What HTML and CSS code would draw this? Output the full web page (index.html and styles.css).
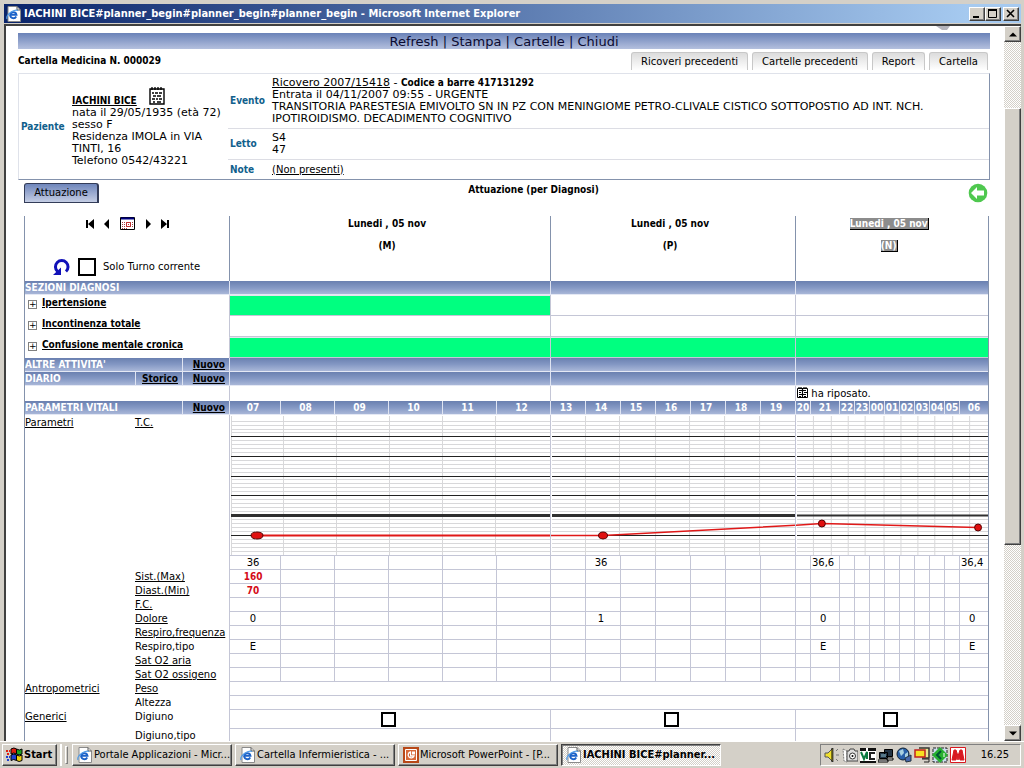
FILE: index.html
```html
<!DOCTYPE html>
<html lang="it">
<head>
<meta charset="utf-8">
<title>IACHINI BICE - Cartella Medicina</title>
<link rel="stylesheet" href="styles.css">
</head>
<body>
<svg class="defs" aria-hidden="true">
  <symbol id="ie" viewBox="0 0 16 16">
    <path d="M2 .5h9l3.500 3.500v11.500H2z" fill="#fff" stroke="#8a8a8a"/>
    <path d="M11 .5V4h3.500" fill="none" stroke="#555"/>
    <path d="M10.500 8.800H4.200a3.200 3.200 0 0 1 6.300 0zM4.200 9.200a3.200 3.200 0 0 0 6 1.300" fill="none" stroke="#1c62c8" stroke-width="1.900"/>
    <path d="M1 13C-.5 9 8 2.500 12 4.500" fill="none" stroke="#4f9be8" stroke-width="1.200"/>
  </symbol>
  <symbol id="notes" viewBox="0 0 16 18">
    <path d="M1 2h14v15H1z" fill="#fff" stroke="#000" stroke-width="1.400"/>
    <path d="M3 0v3M6 0v3M9 0v3M12 0v3" stroke="#000" stroke-width="1.300"/>
    <path d="M3 6h2m1 0h3m1 0h3M4 9h3m1 0h4M3 12h3m1 0h2m1 0h3M4 15h2m2 0h4" stroke="#000" stroke-width="1.500"/>
  </symbol>
  <symbol id="book" viewBox="0 0 11 11">
    <path d="M.5 1.500h10v9H.5z" fill="#fff" stroke="#000"/>
    <path d="M5.500 1v10M2 0v2M4 0v2M7 0v2M9 0v2M2 3.500h3M6 3.500h3M2 5.500h2M7 5.500h3M2 7.500h3M6 7.500h3M2 9.500h2M7 9.500h2" stroke="#000" stroke-width="1.200"/>
  </symbol>
</svg>

<header class="titlebar">
  <svg class="ico" role="img" aria-label="Internet Explorer"><use href="#ie"/></svg>
  <h1>IACHINI BICE#planner_begin#planner_begin#planner_begin - Microsoft Internet Explorer</h1>
  <button class="win" aria-label="Riduci a icona"><svg viewBox="0 0 12 10"><path d="M2 8h6" stroke="#000" stroke-width="2"/></svg></button>
  <button class="win" aria-label="Ingrandisci"><svg viewBox="0 0 12 10"><path d="M1.500 1v7.500h8V1M1 1h9" fill="none" stroke="#000"/><path d="M1 1h9" stroke="#000" stroke-width="2"/></svg></button>
  <button class="win close" aria-label="Chiudi finestra"><svg viewBox="0 0 12 10"><path d="M2 1l7 7M9 1L2 8" stroke="#000" stroke-width="1.600"/></svg></button>
</header>

<div class="viewport">
  <main class="page">
    <svg class="blob" viewBox="0 0 14 5" aria-hidden="true"><path d="M0 0h14l-3 4H6z" fill="#b4b4bc"/></svg>
    <nav class="menubar"><a href="#">Refresh</a> | <a href="#">Stampa</a> | <a href="#">Cartelle</a> | <a href="#">Chiudi</a></nav>

    <div class="record">
      <h2>Cartella Medicina N. 000029</h2>
      <div class="tabs">
        <button>Ricoveri precedenti</button>
        <button>Cartelle precedenti</button>
        <button>Report</button>
        <button>Cartella</button>
      </div>
    </div>

    <section class="patient">
      <div class="person">
        <b class="key">Paziente</b>
        <div>
          <div class="name"><a href="#">IACHINI BICE</a><svg role="img" aria-label="Note paziente"><use href="#notes"/></svg></div>
          nata il 29/05/1935 (età 72)<br>sesso F<br>Residenza IMOLA in VIA<br>TINTI, 16<br>Telefono 0542/43221
        </div>
      </div>
      <div class="facts">
        <div class="fact event"><b class="key">Evento</b><p><a href="#">Ricovero 2007/15418</a> - <b>Codice a barre 417131292</b><br>Entrata il 04/11/2007 09:55 - URGENTE<br>TRANSITORIA PARESTESIA EMIVOLTO SN IN PZ CON MENINGIOME PETRO-CLIVALE CISTICO SOTTOPOSTIO AD INT. NCH.<br>IPOTIROIDISMO. DECADIMENTO COGNITIVO</p></div>
        <div class="fact bed"><b class="key">Letto</b><p>S4<br>47</p></div>
        <div class="fact note"><b class="key">Note</b><p><a href="#">(Non presenti)</a></p></div>
      </div>
    </section>

    <div class="heading">
      <button class="active-tab">Attuazione</button>
      <h2>Attuazione (per Diagnosi)</h2>
      <a class="back" href="#" aria-label="Indietro"><svg viewBox="0 0 20 20"><circle cx="10" cy="10" r="9.300" fill="#4fc84f"/><path d="M3 10l6-6v3.500h7v5H9V16z" fill="#fff"/></svg></a>
    </div>

    <table class="planner">
      <colgroup>
        <col class="c-cat"><col class="c-lab"><col class="c-lab">
        <col class="c-m1"><col class="c-m" span="5">
        <col class="c-p" span="7">
        <col class="c-n"><col class="c-nw"><col class="c-n" span="8"><col class="c-nw">
      </colgroup>
      <tbody>
      <tr class="days">
        <td colspan="3">
          <div class="steps">
            <button aria-label="Primo"><svg viewBox="0 0 8 10"><path d="M0 1h2v8H0zM8 0v10L2 5z"/></svg></button>
            <button aria-label="Precedente"><svg viewBox="0 0 8 10"><path d="M6 0v10L1 5z"/></svg></button>
            <button class="cal" aria-label="Calendario"><svg viewBox="0 0 15 13"><path d="M.5 .5h14v12H.5z" fill="#fff" stroke="#000"/><path d="M1 1.500h13" stroke="#000080" stroke-width="2"/><path d="M2 5.500h11M2 7.500h11M2 9.500h11M2 11.500h6" stroke="#a04040" stroke-dasharray="1 1"/><path d="M6.500 5.500h4v4h-4z" fill="#fff" stroke="#c03030"/><path d="M8 7.500h1" stroke="#c03030"/></svg></button>
            <button aria-label="Successivo"><svg viewBox="0 0 8 10"><path d="M2 0v10l5-5z"/></svg></button>
            <button aria-label="Ultimo"><svg viewBox="0 0 8 10"><path d="M6 1h2v8H6zM0 0v10l6-5z"/></svg></button>
          </div>
          <div class="shift">
            <button aria-label="Aggiorna"><svg viewBox="0 0 17 17"><path d="M4.500 12.500A6.300 6.300 0 1 1 13 12.500" fill="none" stroke="#1111b8" stroke-width="3"/><path d="M0 16h8V8.500z" fill="#1111b8"/></svg></button>
            <label><input type="checkbox"> Solo Turno corrente</label>
          </div>
        </td>
        <th colspan="6"><span>Lunedi , 05 nov</span><span>(M)</span></th>
        <th colspan="7"><span>Lunedi , 05 nov</span><span>(P)</span></th>
        <th colspan="11" class="current"><span>Lunedi , 05 nov</span><span>(N)</span></th>
      </tr>
      <tr class="band"><th colspan="3">SEZIONI DIAGNOSI</th><td colspan="6"></td><td colspan="7"></td><td colspan="11"></td></tr>
      <tr class="diag"><th colspan="3"><button aria-label="Espandi Ipertensione">+</button><a href="#">Ipertensione</a></th><td colspan="6" class="on"></td><td colspan="7"></td><td colspan="11"></td></tr>
      <tr class="diag"><th colspan="3"><button aria-label="Espandi Incontinenza totale">+</button><a href="#">Incontinenza totale</a></th><td colspan="6"></td><td colspan="7"></td><td colspan="11"></td></tr>
      <tr class="diag"><th colspan="3"><button aria-label="Espandi Confusione mentale cronica">+</button><a href="#">Confusione mentale cronica</a></th><td colspan="6" class="on"></td><td colspan="7" class="on"></td><td colspan="11" class="on"></td></tr>
      <tr class="band"><th colspan="2">ALTRE ATTIVITA'</th><td class="act"><a href="#">Nuovo</a></td><td colspan="6"></td><td colspan="7"></td><td colspan="11"></td></tr>
      <tr class="band"><th>DIARIO</th><td class="act"><a href="#">Storico</a></td><td class="act"><a href="#">Nuovo</a></td><td colspan="6"></td><td colspan="7"></td><td colspan="11"></td></tr>
      <tr class="diary"><td colspan="3"></td><td colspan="6"></td><td colspan="7"></td><td colspan="11"><svg role="img" aria-label="Nota"><use href="#book"/></svg> ha riposato.</td></tr>
      <tr class="band hours"><th colspan="2">PARAMETRI VITALI</th><td class="act"><a href="#">Nuovo</a></td>
        <th>07</th><th>08</th><th>09</th><th>10</th><th>11</th><th>12</th><th>13</th><th>14</th><th>15</th><th>16</th><th>17</th><th>18</th><th>19</th><th>20</th><th>21</th><th>22</th><th>23</th><th>00</th><th>01</th><th>02</th><th>03</th><th>04</th><th>05</th><th>06</th></tr>
      <tr class="chart">
        <th><a href="#">Parametri</a></th><th colspan="2"><a href="#">T.C.</a></th>
        <td colspan="6"><svg viewBox="0 0 320 140" preserveAspectRatio="none" role="img" aria-label="Temperatura, mattina">
          <path class="minor" d="M1 6.500h319M1 10.500h319M1 14.500h319M1 17.500h319M1 25.500h319M1 29.500h319M1 33.500h319M1 37.500h319M1 45.500h319M1 49.500h319M1 53.500h319M1 57.500h319M1 64.500h319M1 68.500h319M1 72.500h319M1 76.500h319M1 84.500h319M1 88.500h319M1 92.500h319M1 96.500h319M1 104.500h319M1 108.500h319M1 112.500h319M1 116.500h319M1 124.500h319M1 128.500h319M1 132.500h319M1 136.500h319"/>
          <path class="minor" d="M1.500 1v139M53.500 1v139M106.500 1v139M159.500 1v139M212.500 1v139M265.500 1v139"/>
          <path class="major" d="M1 21.500h319M1 41.500h319M1 61.500h319M1 80.500h319M1 120.500h319"/>
          <path class="limit" d="M1 100.500h319"/>
          <path class="trace bold" d="M27 120.500h293"/><ellipse cx="27" cy="120.500" rx="6" ry="3.500"/></svg></td>
        <td colspan="7"><svg viewBox="0 0 244 140" preserveAspectRatio="none" role="img" aria-label="Temperatura, pomeriggio">
          <path class="minor" d="M1 6.500h243M1 10.500h243M1 14.500h243M1 17.500h243M1 25.500h243M1 29.500h243M1 33.500h243M1 37.500h243M1 45.500h243M1 49.500h243M1 53.500h243M1 57.500h243M1 64.500h243M1 68.500h243M1 72.500h243M1 76.500h243M1 84.500h243M1 88.500h243M1 92.500h243M1 96.500h243M1 104.500h243M1 108.500h243M1 112.500h243M1 116.500h243M1 124.500h243M1 128.500h243M1 132.500h243M1 136.500h243"/>
          <path class="minor" d="M34.500 1v139M68.500 1v139M104.500 1v139M138.500 1v139M173.500 1v139M208.500 1v139"/>
          <path class="major" d="M1 21.500h243M1 41.500h243M1 61.500h243M1 80.500h243M1 120.500h243"/>
          <path class="limit" d="M1 100.500h243"/>
          <path class="trace" d="M0 120.500h52L244 110.300"/><ellipse cx="52" cy="120.500" rx="4.500" ry="3.500"/></svg></td>
        <td colspan="11"><svg viewBox="0 0 193 140" preserveAspectRatio="none" role="img" aria-label="Temperatura, notte">
          <path class="minor" d="M1 6.500h192M1 10.500h192M1 14.500h192M1 17.500h192M1 25.500h192M1 29.500h192M1 33.500h192M1 37.500h192M1 45.500h192M1 49.500h192M1 53.500h192M1 57.500h192M1 64.500h192M1 68.500h192M1 72.500h192M1 76.500h192M1 84.500h192M1 88.500h192M1 92.500h192M1 96.500h192M1 104.500h192M1 108.500h192M1 112.500h192M1 116.500h192M1 124.500h192M1 128.500h192M1 132.500h192M1 136.500h192"/>
          <path class="minor" d="M17.500 1v139M35.500 1v139M52.500 1v139M69.500 1v139M88.500 1v139M105.500 1v139M122.500 1v139M139.500 1v139M157.500 1v139M174.500 1v139"/>
          <path class="major" d="M1 21.500h192M1 41.500h192M1 61.500h192M1 80.500h192M1 120.500h192"/>
          <path class="limit thin" d="M1 100.500h192"/>
          <path class="trace" d="M0 110.200L26 108.500L183 112.500"/><circle cx="26" cy="108.500" r="3.500"/><circle cx="183" cy="112.500" r="3.500"/></svg></td>
      </tr>
      <tr class="vals"><th></th><th colspan="2"></th><td>36</td><td></td><td></td><td></td><td></td><td></td><td></td><td>36</td><td></td><td></td><td></td><td></td><td></td><td></td><td>36,6</td><td></td><td></td><td></td><td></td><td></td><td></td><td></td><td></td><td>36,4</td></tr>
      <tr class="vals"><th></th><th colspan="2"><a href="#">Sist.(Max)</a></th><td class="high">160</td><td></td><td></td><td></td><td></td><td></td><td></td><td></td><td></td><td></td><td></td><td></td><td></td><td></td><td></td><td></td><td></td><td></td><td></td><td></td><td></td><td></td><td></td><td></td></tr>
      <tr class="vals"><th></th><th colspan="2"><a href="#">Diast.(Min)</a></th><td class="high">70</td><td></td><td></td><td></td><td></td><td></td><td></td><td></td><td></td><td></td><td></td><td></td><td></td><td></td><td></td><td></td><td></td><td></td><td></td><td></td><td></td><td></td><td></td><td></td></tr>
      <tr class="vals"><th></th><th colspan="2"><a href="#">F.C.</a></th><td></td><td></td><td></td><td></td><td></td><td></td><td></td><td></td><td></td><td></td><td></td><td></td><td></td><td></td><td></td><td></td><td></td><td></td><td></td><td></td><td></td><td></td><td></td><td></td></tr>
      <tr class="vals"><th></th><th colspan="2"><a href="#">Dolore</a></th><td>0</td><td></td><td></td><td></td><td></td><td></td><td></td><td>1</td><td></td><td></td><td></td><td></td><td></td><td></td><td>0</td><td></td><td></td><td></td><td></td><td></td><td></td><td></td><td></td><td>0</td></tr>
      <tr class="vals"><th></th><th colspan="2"><a href="#">Respiro,frequenza</a></th><td></td><td></td><td></td><td></td><td></td><td></td><td></td><td></td><td></td><td></td><td></td><td></td><td></td><td></td><td></td><td></td><td></td><td></td><td></td><td></td><td></td><td></td><td></td><td></td></tr>
      <tr class="vals"><th></th><th colspan="2">Respiro,tipo</th><td>E</td><td></td><td></td><td></td><td></td><td></td><td></td><td></td><td></td><td></td><td></td><td></td><td></td><td></td><td>E</td><td></td><td></td><td></td><td></td><td></td><td></td><td></td><td></td><td>E</td></tr>
      <tr class="vals"><th></th><th colspan="2"><a href="#">Sat O2 aria</a></th><td></td><td></td><td></td><td></td><td></td><td></td><td></td><td></td><td></td><td></td><td></td><td></td><td></td><td></td><td></td><td></td><td></td><td></td><td></td><td></td><td></td><td></td><td></td><td></td></tr>
      <tr class="vals"><th></th><th colspan="2"><a href="#">Sat O2 ossigeno</a></th><td></td><td></td><td></td><td></td><td></td><td></td><td></td><td></td><td></td><td></td><td></td><td></td><td></td><td></td><td></td><td></td><td></td><td></td><td></td><td></td><td></td><td></td><td></td><td></td></tr>
      <tr class="vals"><th><a href="#">Antropometrici</a></th><th colspan="2"><a href="#">Peso</a></th><td colspan="24"></td></tr>
      <tr class="vals"><th></th><th colspan="2">Altezza</th><td colspan="24"></td></tr>
      <tr class="vals tall"><th><a href="#">Generici</a></th><th colspan="2">Digiuno</th><td colspan="6"><input type="checkbox" aria-label="Digiuno mattina"></td><td colspan="7"><input type="checkbox" aria-label="Digiuno pomeriggio"></td><td colspan="11"><input type="checkbox" aria-label="Digiuno notte"></td></tr>
      <tr class="vals tall"><th></th><th colspan="2">Digiuno,tipo</th><td colspan="6"></td><td colspan="7"></td><td colspan="11"></td></tr>
      </tbody>
    </table>
  </main>
  <div class="scrollbar">
    <button aria-label="Scorri su"><svg viewBox="0 0 8 5"><path d="M0 4.500h8L4 .5z"/></svg></button>
    <div class="before"></div><div class="thumb"></div><div class="after"></div>
    <button aria-label="Scorri giù"><svg viewBox="0 0 8 5"><path d="M0 .5h8L4 4.500z"/></svg></button>
  </div>
</div>

<footer class="taskbar">
  <button class="start"><svg viewBox="0 0 17 16" aria-hidden="true"><path d="M5 2q3-2 5.500 0v5q-3-2-5.500 0z" fill="#e02010" stroke="#000"/><path d="M10.500 2q3 2 5.500 0v5q-3 2-5.500 0z" fill="#20a020" stroke="#000"/><path d="M5 8q3-2 5.500 0v5.500q-3-2-5.500 0z" fill="#2040d0" stroke="#000"/><path d="M10.500 8q3 2 5.500 0v5.500q-3 2-5.500 0z" fill="#f0d010" stroke="#000"/><path d="M0 4h4M1 7h3" stroke="#e02010" stroke-width="2" stroke-dasharray="2 1"/><path d="M0 10h4M1 13h3" stroke="#2040d0" stroke-width="2" stroke-dasharray="2 1"/></svg>Start</button>
  <span class="sep"></span><span class="grip"></span>
  <button class="task"><svg aria-hidden="true"><use href="#ie"/></svg><span>Portale Applicazioni - Micr...</span></button>
  <button class="task"><svg aria-hidden="true"><use href="#ie"/></svg><span>Cartella Infermieristica - ...</span></button>
  <button class="task"><svg viewBox="0 0 16 16" aria-hidden="true"><path d="M0 0h16v16H0z" fill="#b84818"/><path d="M2.500 2.500h11v11h-11z" fill="#d86838" stroke="#fff"/><path d="M7.500 5A3 3 0 1 0 11 9H7.500z" fill="#b84818" stroke="#fff" stroke-width="1.300"/><path d="M9 4.500h3v3H9z" fill="#fff"/></svg><span>Microsoft PowerPoint - [P...</span></button>
  <button class="task pressed"><svg aria-hidden="true"><use href="#ie"/></svg><span>IACHINI BICE#planner...</span></button>
  <div class="tray">
    <svg viewBox="0 0 16 16" role="img" aria-label="Volume"><path d="M1 6h3l5-5v14l-5-5H1z" fill="#f0e030" stroke="#555"/><path d="M8 1v14" stroke="#000"/><path d="M12 8h3M12 4l2-2M12 12l2 2" stroke="#777"/></svg>
    <svg viewBox="0 0 16 16" role="img" aria-label="Periferica"><path d="M1 2l4 2v11l-3-1z" fill="#fff" stroke="#777" stroke-dasharray="2 1"/><path d="M5 4h2l1-2h4l1 2h3v10H5z" fill="#ddd" stroke="#444"/><circle cx="10.500" cy="9" r="3" fill="#fff" stroke="#333"/><circle cx="10.500" cy="9" r="1"/></svg>
    <svg viewBox="0 0 16 16" role="img" aria-label="VNC"><path d="M0 1h16v14H0z" fill="#fff"/><path d="M0 1h6v3H0zM8 1h8v3H8zM0 14h16v2H0z" fill="#111"/><path d="M1 5l3 7 3-7v7" fill="none" stroke="#0a7a40" stroke-width="2"/><path d="M15 6h-5v6h5" fill="none" stroke="#222" stroke-width="2"/></svg>
    <svg viewBox="0 0 16 16" role="img" aria-label="Rete"><path d="M6.500 2.500h8v7h-8zM1.500 5.500h8v6h-8z" fill="#234" stroke="#000"/><path d="M3 7h5v3H3z" fill="#578"/><path d="M0 13h10v2H0zM9 11h6v2H9z" fill="#eee" stroke="#000"/></svg>
    <svg viewBox="0 0 16 16" role="img" aria-label="Rete globale"><circle cx="7" cy="7" r="6" fill="#2860a8" stroke="#123"/><path d="M3 4l4-2 1 4-3 3zM9 7l3-2v5l-3 1z" fill="#a8d0e0"/><path d="M9 11l6-3v6l-5 1z" fill="#46a" stroke="#234"/></svg>
    <svg viewBox="0 0 16 16" role="img" aria-label="Appunti"><path d="M5 1h10v10H8" fill="#e8e890" stroke="#333" stroke-width="1.500"/><path d="M1 3h10v7H1z" fill="#f8e020" stroke="#c02020" stroke-width="1.500"/><path d="M8 12h7v3h-5" fill="none" stroke="#222"/></svg>
    <svg viewBox="0 0 16 16" role="img" aria-label="Sincronizzazione"><path d="M1 1h14v14H1z" fill="#cde" stroke="#222" stroke-dasharray="3 1"/><path d="M8 0l8 8-8 8-8-8z" fill="#28b030"/><path d="M9 4L5 8l4 4" fill="none" stroke="#053" stroke-width="2"/><path d="M12 6v4" stroke="#fff"/></svg>
    <svg viewBox="0 0 16 16" role="img" aria-label="Antivirus"><path d="M.5 .5h15v15H.5z" fill="#fff" stroke="#d81820"/><path d="M2 13L4 3h2l2 6 2-6h2l2 10h-4l-1-4-1 4-1-4-1 4z" fill="#d81820" stroke="#d81820"/></svg>
    <time>16.25</time>
  </div>
</footer>
</body>
</html>
```

FILE: styles.css
```css
* { box-sizing: border-box; }

:root {
  --face: #d4d0c8;
  --grid: #c4c6d6;
  --edge: #8492ac;
  --band: linear-gradient(#6a80b0, #8498c4 50%, #a9b7d8);
  --ui: "DejaVu Sans Condensed", "DejaVu Sans", sans-serif;
  --dither: repeating-conic-gradient(#fff 0 25%, var(--face) 0 50%) 0 0 / 2px 2px;
}

body {
  margin: 0;
  height: 100vh;
  display: flex;
  flex-direction: column;
  overflow: hidden;
  background: var(--face);
  color: #000;
  font: 10px/12px "DejaVu Sans", sans-serif;
}

.defs { display: none; }
a { color: inherit; }
button { margin: 0; padding: 0; border: 0; background: none; color: inherit; font: inherit; }
h1, h2, p { margin: 0; }
svg { display: block; flex: none; }

/* Window frame */
.titlebar {
  display: flex;
  align-items: center;
  height: 19px;
  flex: none;
  margin: 4px 3px 0 4px;
  padding: 0 2px;
  background: linear-gradient(90deg, #0a246a, #a6caf0 95%);
  color: #fff;
}
.titlebar .ico { width: 16px; height: 16px; }
.titlebar h1 { flex: 1; margin-left: 2px; font: bold 11px/18px var(--ui); white-space: nowrap; }
.win, .scrollbar button, .thumb, .start, .task {
  background: var(--face);
  border: 1px solid;
  border-color: #fff #404040 #404040 #fff;
  box-shadow: inset -1px -1px #808080;
}
.win { width: 16px; height: 14px; }
.win svg { width: 12px; height: 10px; margin: 1px; }
.close { margin-left: 2px; }

.viewport {
  display: flex;
  flex: 1;
  min-height: 0;
  margin: 1px 3px 0 4px;
  border-top: 2px solid #404040;
  border-left: 2px solid #404040;
  background: #fff;
}
.page { position: relative; flex: 1; min-width: 0; padding: 7px 14px 0 12px; overflow: hidden; }
.blob { position: absolute; top: 0; right: 54px; width: 14px; height: 5px; }

.scrollbar { display: flex; flex-direction: column; width: 17px; background: var(--dither); }
.scrollbar button { height: 16px; flex: none; display: grid; place-items: center; }
.scrollbar svg { width: 8px; height: 5px; }
.before { flex: 66; }
.thumb { flex: 439; }
.after { flex: 181; }

/* Record header */
.menubar {
  height: 16px;
  background: linear-gradient(#6a82b8, #b4c0de);
  color: #0a0a30;
  font: 13px/17px "DejaVu Sans", sans-serif;
  text-align: center;
}
.menubar a { text-decoration: none; }
.record { display: flex; align-items: center; height: 24px; }
h2, b, .diag a, .high, .days th, .band, .act { font-family: var(--ui); font-weight: bold; }
h2 { font-size: 10px; line-height: 12px; flex: 1; }
.tabs { display: flex; gap: 4px; padding-right: 2px; }
.tabs button {
  height: 18px;
  padding: 0 9px;
  border: 1px solid #c8c8c8;
  border-bottom: 0;
  border-radius: 3px 3px 0 0;
  background: linear-gradient(#dcdcdc, #fff);
}

.patient {
  display: flex;
  border: 1px solid var(--edge);
  border-top-color: #dfe2ea;
  border-left-color: #dfe2ea;
  font-size: 11px;
}
.patient b { font-size: 10px; }
.person { display: flex; align-items: center; width: 209px; flex: none; padding-left: 2px; white-space: nowrap; }
.person .key { width: 51px; }
.key { color: #10608c; flex: none; }
.name { display: flex; align-items: flex-end; gap: 12px; font: bold 10px/12px var(--ui); }
.name svg { width: 16px; height: 18px; margin-bottom: 2px; }
.facts { flex: 1; min-width: 0; }
.fact { display: flex; align-items: center; padding-left: 2px; }
.fact + .fact { border-top: 1px solid #dcdde4; }
.fact .key { width: 42px; }
.fact a { font-size: 11px; }
.event { height: 54px; }
.bed { height: 31px; }
.note { height: 20px; }
.note p, .note a { font-size: 10px; }

.heading { display: flex; align-items: center; gap: 8px; height: 21px; margin: 2px 2px 13px 6px; }
.heading h2 { text-align: center; margin-top: -6px; }
.active-tab {
  width: 75px;
  height: 20px;
  border: 1px solid #333c58;
  border-width: 1px 2px 1px 1px;
  border-radius: 3px 3px 0 0;
  background: linear-gradient(#6f86bb, #c4cde4);
}
.back svg { width: 20px; height: 20px; }

/* Planner grid */
.planner {
  width: calc(100% - 7px);
  margin-left: 6px;
  table-layout: fixed;
  border-collapse: separate;
  border-spacing: 0;
  border-left: 1px solid var(--edge);
  border-right: 1px solid var(--edge);
}
.c-cat { width: 110px; }
.c-lab { width: 47px; }
.c-m1 { width: 51px; }
.c-m { width: 54px; }
.c-p { width: 35px; }
.c-n { width: 15px; }
.c-nw { width: 29px; }
.planner td, .planner th { padding: 0; text-align: center; overflow: hidden; white-space: nowrap; }

.days { height: 65px; }
.planner .days th { vertical-align: top; border-left: 1px solid var(--edge); padding: 2px 6px 0 0; }
.days span { display: table; margin: 0 auto 10px; line-height: 12px; }
.current span { background: #8c8c8c; color: #fff; border: solid #000; border-width: 0 1px 1px 0; line-height: 11px; }
.days td { vertical-align: top; }
.steps { display: flex; justify-content: center; align-items: center; gap: 9px; height: 15px; }
.steps svg { width: 8px; height: 10px; }
.steps .cal svg { width: 15px; height: 13px; }
.shift { display: flex; align-items: center; gap: 8px; margin: 27px 0 0 28px; }
.shift svg { width: 17px; height: 17px; }
.shift label { display: flex; align-items: center; gap: 7px; }
input[type="checkbox"] {
  appearance: none;
  width: 15px;
  height: 15px;
  margin: 0;
  border: 2px solid #000;
  background: #fff;
}
.shift input[type="checkbox"] { width: 18px; height: 18px; }

.band { height: 14px; line-height: 12px; }
.planner .band th, .planner .band td {
  background: var(--band);
  border-bottom: 1px solid #e4e8f4;
  border-left: 1px solid #dfe4f2;
  color: #fff;
}
.planner .band th:first-child { border-left: 0; text-align: left; }
.planner .band .act { color: #000; text-align: right; padding-right: 4px; }
.planner .hours th:nth-child(n+3):nth-child(-n+15) { padding-right: 4px; }

.diag { height: 21px; }
.diag th { vertical-align: top; }
.planner .diag th { text-align: left; padding: 2px 0 0 3px; line-height: 12px; }
.diag button {
  width: 9px;
  height: 9px;
  margin-right: 5px;
  border: 1px solid #808080;
  font: 9px/7px "DejaVu Sans", sans-serif;
  vertical-align: -1px;
}
.diag td { border-left: 1px solid var(--grid); border-bottom: 1px solid var(--grid); }
.diag .on { background: #00ff80 content-box; border-top: 1px solid #e4e4ee; }

.diary { height: 15px; }
.diary td + td { border-left: 1px solid var(--grid); }
.planner .diary td { text-align: left; }
.diary svg { display: inline-block; width: 11px; height: 11px; margin-left: 1px; vertical-align: -1px; }

.chart th, .vals th { font-weight: normal; }
.planner .chart th, .planner .vals th { text-align: left; vertical-align: top; line-height: 14px; overflow: visible; }
.planner .chart th { padding-top: 1px; }
.chart td, .vals td { border-left: 1px solid var(--grid); border-bottom: 1px solid var(--grid); }
.chart svg { width: 100%; height: 140px; }
.minor { stroke: #d8d8da; }
.major { stroke: #222; }
.limit { stroke: #303030; stroke-width: 3; }
.limit.thin { stroke-width: 2; }
.trace { fill: none; stroke: #e01818; stroke-width: 1.5; }
.trace.bold { stroke-width: 2; }
.chart ellipse, .chart circle { fill: #e01010; stroke: #500; }

.vals { height: 14px; }
.planner .vals td { line-height: 13px; padding-right: 4px; overflow: visible; }
.vals .high { color: #d40c18; }
.tall { height: 19px; }
.tall input { display: block; margin: 0 auto; }

/* Taskbar */
.taskbar {
  display: flex;
  align-items: center;
  height: 27px;
  flex: none;
  padding: 0 3px 0 2px;
  border-top: 1px solid #fff;
  background: var(--face);
  font: 11px/14px var(--ui);
}
.start { display: flex; align-items: center; gap: 1px; width: 55px; height: 22px; padding-left: 3px; font-weight: bold; }
.start svg { width: 17px; height: 16px; }
.sep { width: 2px; height: 22px; margin: 0 3px; border: solid; border-width: 0 1px; border-color: #808080 #fff; }
.grip { width: 3px; height: 18px; margin-right: 4px; border: 1px solid; border-color: #fff #808080 #808080 #fff; }
.task {
  display: flex;
  align-items: center;
  flex: 0 1 160px;
  min-width: 0;
  height: 22px;
  margin-right: 3px;
  padding-left: 4px;
  white-space: nowrap;
}
.task svg { width: 16px; height: 16px; margin-right: 1px; }
.task span { overflow: hidden; }
.pressed {
  background: var(--dither);
  border-color: #404040 #fff #fff #404040;
  box-shadow: inset 1px 1px #808080;
  font-weight: bold;
}
.tray {
  display: flex;
  align-items: center;
  gap: 2px;
  width: 201px;
  height: 22px;
  margin-left: auto;
  padding-left: 3px;
  border: 1px solid;
  border-color: #808080 #fff #fff #808080;
}
.tray svg { width: 16px; height: 16px; }
.tray time { flex: 1; text-align: right; padding-right: 11px; }
```
